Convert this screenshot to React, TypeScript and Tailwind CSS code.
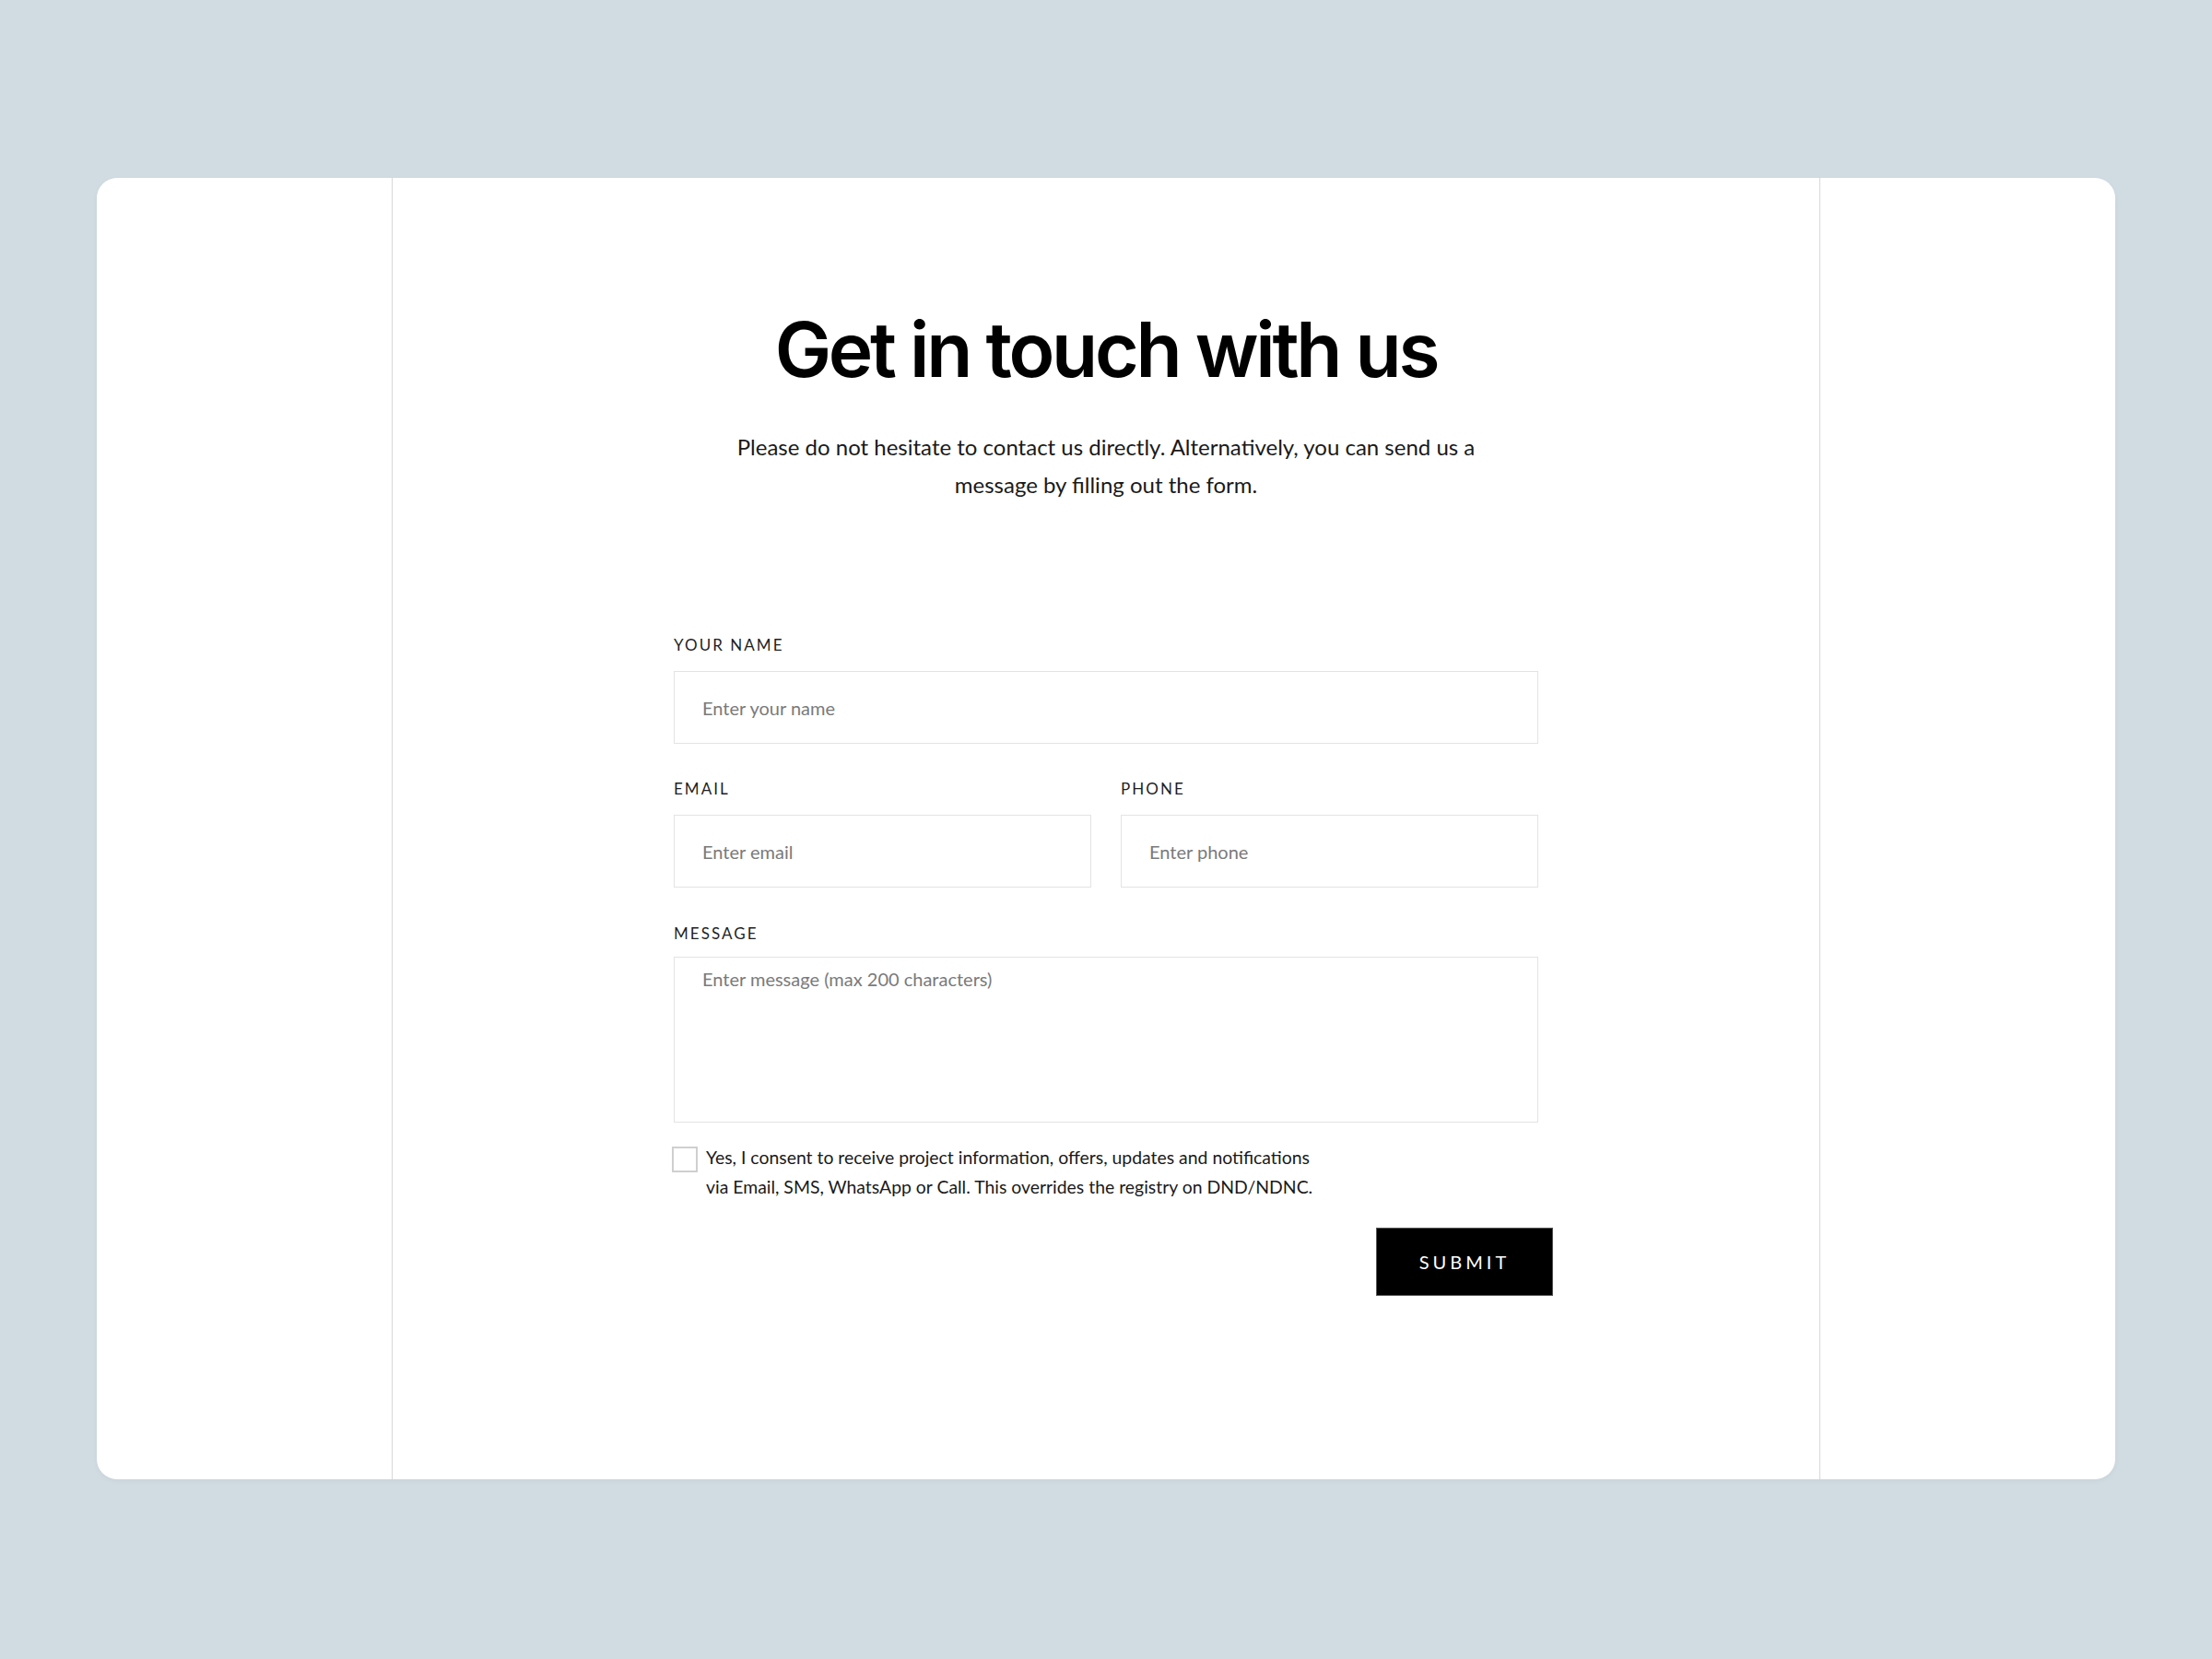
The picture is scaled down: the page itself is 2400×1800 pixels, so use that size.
import React from "react";

const body = { fontFamily: "Lato, 'Noto Sans', sans-serif" };

function Label({ children, tight }: { children: React.ReactNode; tight?: boolean }) {
  return (
    <label
      className={
        tight
          ? "block text-[17px] leading-6 tracking-[0.12em] text-[#1f1f1f] mb-[13px]"
          : "block text-[17px] leading-6 tracking-[0.12em] text-[#1f1f1f] mb-[16px]"
      }
    >
      {children}
    </label>
  );
}

const field =
  "block h-[79px] w-full border border-[#e3e3e3] px-[30px] text-[20px] text-[#333] placeholder:text-[#7a7a7a] outline-none";

export default function App() {
  return (
    <div className="min-h-[1800px] w-full bg-[#d1dce2] pt-[193px] px-[104px]" style={body}>
      <div className="mx-auto flex h-[1412px] w-[2190px] rounded-[22px] bg-white shadow-[0_2px_6px_rgba(0,0,0,0.04)]">
        <div className="w-[320px] shrink-0" />
        <div className="flex flex-1 flex-col items-center border-x border-[#d8d8d8] pt-[138px]">
          <h1
            className="text-[82px] leading-[1.2] font-semibold tracking-[-0.04em] text-black"
            style={{ fontFamily: "Inter, 'Liberation Sans', sans-serif" }}
          >
            Get in touch with us
          </h1>
          <p className="mt-[35px] w-[860px] text-center text-[24px] leading-[41px] text-[#1a1a1a]">
            Please do not hesitate to contact us directly. Alternatively, you can send us a message by filling out the form.
          </p>

          <form className="mt-[142px] w-[938px]">
            <Label>YOUR NAME</Label>
            <input placeholder="Enter your name" className={field} />

            <div className="mt-[37px] grid grid-cols-2 gap-[32px]">
              <div>
                <Label>EMAIL</Label>
                <input placeholder="Enter email" className={field} />
              </div>
              <div>
                <Label>PHONE</Label>
                <input placeholder="Enter phone" className={field} />
              </div>
            </div>

            <div className="mt-[38px]">
              <Label tight>MESSAGE</Label>
              <textarea
                placeholder="Enter message (max 200 characters)"
                className="block h-[180px] w-full resize-none border border-[#e3e3e3] px-[30px] pt-[7px] text-[20px] leading-8 text-[#333] placeholder:text-[#7a7a7a] outline-none"
              />
            </div>

            <div className="mt-[22px] flex items-start gap-[9px]">
              <span className="mt-[4px] block h-[28px] w-[28px] shrink-0 -ml-[2px] border-2 border-[#cfcfcf] bg-white" />
              <p className="w-[668px] text-[19.4px] leading-[32px] text-[#1a1a1a]">
                Yes, I consent to receive project information, offers, updates and notifications via Email, SMS, WhatsApp or Call. This overrides the registry on DND/NDNC.
              </p>
            </div>

            <div className="mt-[28px] -mr-[16px] flex justify-end">
              <button
                type="button"
                className="h-[74px] w-[192px] border border-[#555] bg-black text-[20px] tracking-[0.2em] text-white"
              >
                SUBMIT
              </button>
            </div>
          </form>
        </div>
        <div className="w-[320px] shrink-0" />
      </div>
    </div>
  );
}
